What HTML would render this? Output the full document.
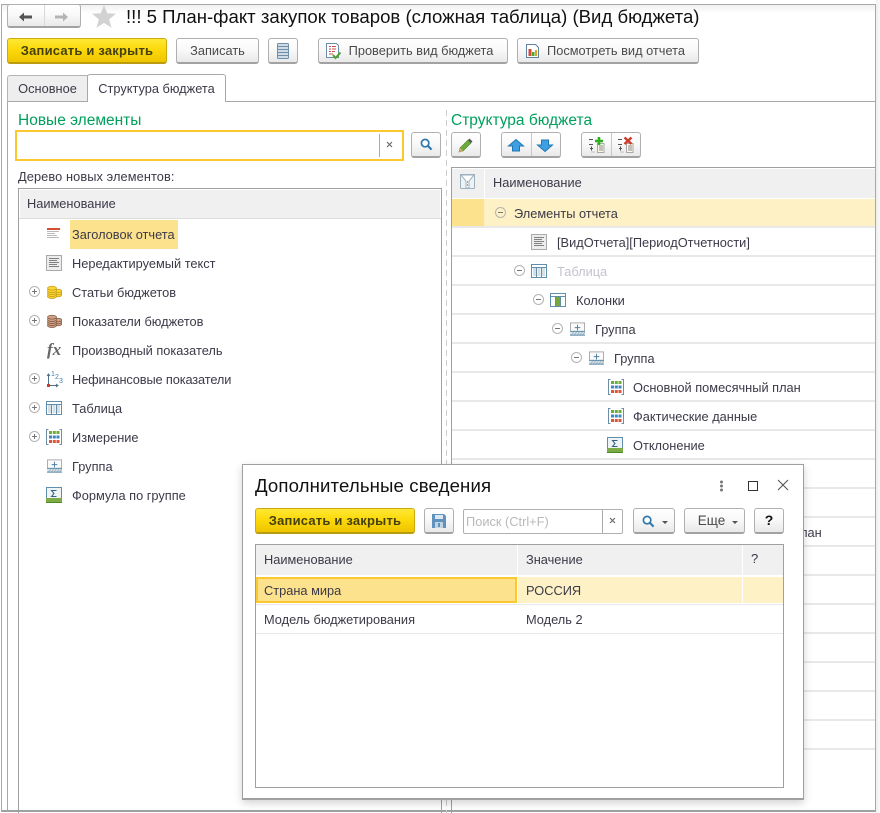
<!DOCTYPE html>
<html><head><meta charset="utf-8"><style>
*{box-sizing:border-box}
html,body{margin:0;padding:0;background:#fff}
#p{position:relative;width:880px;height:813px;overflow:hidden;background:#fff;font:12.8px/16px "Liberation Sans",Arial,sans-serif;color:#3b3a48}
.a{position:absolute}
.t{position:absolute;white-space:nowrap;line-height:16px;margin-top:1px}
.b{position:absolute;height:26px;border:1px solid #b0b0b0;border-bottom:2px solid #a2a2a2;border-radius:3px;background:linear-gradient(#fff,#f9f9f9 45%,#e9e9e9);text-align:center;line-height:23px;color:#4a4a4a;white-space:nowrap}
.y{background:linear-gradient(#ffe733,#fbd808 50%,#eec400);border:1px solid #c9aa10;border-bottom:2px solid #b99c10;color:#45400e;font-weight:bold;font-size:13px;letter-spacing:.2px}
.l{position:absolute;background:#e8e8e8;height:2px}
.h{position:absolute;background:#f0f0f0}
svg{position:absolute;overflow:visible}
.e{position:absolute;width:11px;height:11px;border:1px solid #b4b4b4;border-radius:50%;background:#fff}
.e:before{content:"";position:absolute;left:2px;top:4px;width:5px;height:1px;background:#777}
.e.p:after{content:"";position:absolute;left:4px;top:2px;width:1px;height:5px;background:#777}
</style></head><body><div id="p">
<svg width="0" height="0" style="position:absolute"><defs>
<symbol id="txt" viewBox="0 0 16 16"><rect x=".5" y=".5" width="15" height="15" fill="#ececec" stroke="#aaa"/><path d="M3 3.500h10M3 5.500h8M3 7.500h10M3 9.500h8M3 11.500h10" stroke="#808080" fill="none"/></symbol>
<symbol id="tab" viewBox="0 0 16 16"><rect x=".5" y="1.500" width="15" height="13" fill="#fff" stroke="#5f8fad"/><rect x="2" y="5" width="3" height="8" fill="#d5dfe6"/><rect x="6.500" y="5" width="3" height="8" fill="#d5dfe6"/><rect x="11" y="5" width="3" height="8" fill="#d5dfe6"/><path d="M1 4.500h14M5.500 4.500v10M10.500 4.500v10" stroke="#5f8fad" fill="none"/></symbol>
<symbol id="col" viewBox="0 0 16 16"><rect x=".5" y="1.500" width="15" height="13" fill="#fff" stroke="#5f8fad"/><rect x="6" y="5" width="4" height="9" fill="#76a83a"/><path d="M1 4.500h14M5.500 4.500v10M10.500 4.500v10" stroke="#5f8fad" fill="none"/></symbol>
<symbol id="grp" viewBox="0 0 16 16"><rect x=".5" y="1.500" width="15" height="13" fill="#fbfbfb" stroke="#a8a8a8"/><path d="M8 3.500v6M5 6.500h6" stroke="#4d7f9f" fill="none"/><rect x="0" y="10" width="16" height="5" fill="#dfe6ea"/><path d="M1 15l4-5M4 15l4-5M7 15l4-5M10 15l4-5M13 15l3-4" stroke="#9fb2bf" fill="none"/><path d="M0 10.500h16M0 14.500h16" stroke="#5f8fad" fill="none"/></symbol>
<symbol id="frm" viewBox="0 0 16 16"><rect x=".5" y=".5" width="15" height="14" fill="#eef3f5" stroke="#5f8fad"/><path d="M10.500 3.500h-5l2.500 3-2.500 3h5" fill="none" stroke="#33617f"/><rect x="0" y="11" width="16" height="4" fill="#7dab46"/><path d="M0 15.500h16" stroke="#4f8a28"/></symbol>
<symbol id="dim" viewBox="0 0 16 16"><path d="M2.500 .5h-2v15h2M13.500 .5h2v15h-2" fill="none" stroke="#6c8ea5"/><rect x="3" y="2" width="3" height="3" fill="#6fae3d"/><rect x="6.800" y="2" width="3" height="3" fill="#6fae3d"/><rect x="10.500" y="2" width="3" height="3" fill="#6fae3d"/><rect x="3" y="6.500" width="3" height="3" fill="#3f88bf"/><rect x="6.800" y="6.500" width="3" height="3" fill="#3f88bf"/><rect x="10.500" y="6.500" width="3" height="3" fill="#3f88bf"/><rect x="3" y="11" width="3" height="3" fill="#d9583c"/><rect x="6.800" y="11" width="3" height="3" fill="#d9583c"/><rect x="10.500" y="11" width="3" height="3" fill="#d9583c"/></symbol>
<symbol id="mag" viewBox="0 0 14 14"><circle cx="5.500" cy="5.500" r="4" fill="#fff" stroke="#2f78ad" stroke-width="1.800"/><path d="M8.500 8.500l4 4" stroke="#2f78ad" stroke-width="2.200"/></symbol>
<symbol id="coin" viewBox="0 0 15 14"><g fill="#f9d530" stroke="#c2961a" stroke-width=".7"><ellipse cx="11" cy="10" rx="3.700" ry="1.800"/><ellipse cx="11" cy="8" rx="3.700" ry="1.800"/><ellipse cx="11" cy="6" rx="3.700" ry="1.800"/><ellipse cx="5" cy="11.500" rx="4.500" ry="2"/><ellipse cx="5" cy="9.500" rx="4.500" ry="2"/><ellipse cx="5" cy="7.500" rx="4.500" ry="2"/><ellipse cx="5" cy="5.500" rx="4.500" ry="2"/><ellipse cx="5" cy="3.200" rx="4.500" ry="2"/></g></symbol>
<symbol id="bcoin" viewBox="0 0 15 14"><g fill="#cfa085" stroke="#7b5440" stroke-width=".7"><ellipse cx="11" cy="10" rx="3.700" ry="1.800"/><ellipse cx="11" cy="8" rx="3.700" ry="1.800"/><ellipse cx="11" cy="6" rx="3.700" ry="1.800"/><ellipse cx="5" cy="11.500" rx="4.500" ry="2"/><ellipse cx="5" cy="9.500" rx="4.500" ry="2"/><ellipse cx="5" cy="7.500" rx="4.500" ry="2"/><ellipse cx="5" cy="5.500" rx="4.500" ry="2"/><ellipse cx="5" cy="3.200" rx="4.500" ry="2"/></g></symbol>
<symbol id="dtree" viewBox="0 0 16 17"><path d="M0 3.500h4M0 8.500h4" stroke="#555" fill="none"/><path d="M2.500 10v6h3" stroke="#8aa08a" stroke-dasharray="1 1" fill="none"/><path d="M1 12.500h3M2.500 11v3" stroke="#555" fill="none"/><rect x="8.500" y="7.500" width="6.500" height="9" fill="#fbf8ea" stroke="#a8a8a8"/><path d="M10 10h4M10 12h4M10 14h4" stroke="#8a8a8a"/></symbol>
</defs></svg>

<!-- window frame -->
<div class="a" style="left:0;top:0;width:880px;height:813px;background:linear-gradient(90deg,#fff 875px,#eee 876px,#fafafa 880px)"></div>
<div class="a" style="left:0;top:0;width:876px;height:813px;background:#fff"></div>
<div class="a" style="left:1px;top:4px;width:875px;height:808px;border:1px solid #a8a8a8;border-bottom:2px solid #a0a0a0"></div>
<div class="a" style="left:2px;top:5px;width:873px;height:8px;background:linear-gradient(#f0f0f0,#fff)"></div>

<!-- nav -->
<div class="b" style="left:7px;top:4px;width:74px;height:24px"></div>
<div class="a" style="left:44px;top:5px;width:1px;height:21px;background:#d8d8d8"></div>
<svg style="left:19px;top:12px" width="14" height="10"><path d="M0 5l5-4.500v3h8v3H5v3z" fill="#555"/></svg>
<svg style="left:54px;top:12px" width="14" height="10"><path d="M14 5L9 .5v3H1v3h8v3z" fill="#b4b4b4"/></svg>
<svg style="left:92px;top:5px" width="24" height="24"><path d="M12 0l3.300 8.200 8.700.5-6.800 5.500 2.300 8.500L12 18l-7.500 4.700 2.300-8.500L0 8.700l8.700-.5z" fill="#d2d2d2"/></svg>
<div class="t" style="left:126px;top:6px;font-size:18.6px;line-height:20px;color:#111">!!! 5 План-факт закупок товаров (сложная таблица) (Вид бюджета)</div>

<!-- toolbar -->
<div class="b y" style="left:7px;top:38px;width:160px">Записать и закрыть</div>
<div class="b" style="left:176px;top:38px;width:83px">Записать</div>
<div class="b" style="left:268px;top:38px;width:30px"></div>
<svg style="left:277px;top:43px" width="12" height="16"><rect x=".5" y=".5" width="11" height="15" rx="1" fill="#cfdbe6" stroke="#6f8fa8"/><path d="M1 3.500h10M1 6.500h10M1 9.500h10M1 12.500h10" stroke="#6f8fa8"/></svg>
<div class="b" style="left:318px;top:38px;width:190px;padding-left:16px">Проверить вид бюджета</div>
<svg style="left:326px;top:43px" width="16" height="17"><path d="M.5.5h10l2 2v12H.5z" fill="#fff" stroke="#6d8ca5"/><path d="M3 3.500h2M6 3.500h4M3 6h2M6 6h4M3 8.500h2M6 8.500h3M3 11h4" stroke="#c0504d"/><path d="M7 12l2.500 3 5-5.500" fill="none" stroke="#4fa32c" stroke-width="2"/></svg>
<div class="b" style="left:517px;top:38px;width:182px;padding-left:16px">Посмотреть вид отчета</div>
<svg style="left:526px;top:44px" width="13" height="15"><path d="M.5.5h9l3 3v10H.5z" fill="#fff" stroke="#5f82a0"/><rect x="2.500" y="5" width="3" height="7" fill="#d24a3a"/><rect x="6" y="8" width="2.500" height="4" fill="#4fa32c"/><rect x="9" y="6" width="2" height="6" fill="#e0a020"/></svg>

<!-- tabs -->
<div class="a" style="left:7px;top:101px;width:869px;height:1px;background:#a8a8a8"></div>
<div class="a" style="left:7px;top:101px;width:1px;height:711px;background:#a8a8a8"></div>
<div class="a" style="left:7px;top:75px;width:81px;height:27px;background:#eee;border:1px solid #b4b4b4;border-bottom:1px solid #a8a8a8;border-radius:3px 0 0 0;text-align:center;line-height:25px">Основное</div>
<div class="a" style="left:87px;top:74px;width:139px;height:28px;background:#fff;border:1px solid #a8a8a8;border-bottom:0;border-radius:3px 3px 0 0;text-align:center;line-height:27px">Структура бюджета</div>

<!-- left pane -->
<div class="t" style="left:18px;top:110px;font-size:15.5px;line-height:20px;color:#00a05c">Новые элементы</div>
<div class="a" style="left:15px;top:130px;width:389px;height:31px;border:2px solid #fbc82f;background:#fff"></div>
<div class="a" style="left:379px;top:134px;width:1px;height:23px;background:#aaa"></div>
<svg style="left:386px;top:141px" width="8" height="8"><path d="M1 1l5 5M6 1l-5 5" stroke="#666" stroke-width="1.100"/></svg>
<div class="b" style="left:411px;top:132px;width:30px"></div>
<svg style="left:420px;top:138px" width="13" height="13"><use href="#mag"/></svg>
<div class="t" style="left:18px;top:168px;letter-spacing:.09px">Дерево новых элементов:</div>
<div class="a" style="left:18px;top:188px;width:424px;height:625px;border:1px solid #a0a0a0;border-width:1px 1px 0 1px"></div>
<div class="h" style="left:20px;top:190px;width:420px;height:28px"></div>
<div class="a" style="left:19px;top:218px;width:422px;height:1px;background:#ddd"></div>
<div class="t" style="left:27px;top:195px">Наименование</div>

<div class="a" style="left:70px;top:220px;width:108px;height:29px;background:#fde28e"></div>
<div class="t" style="left:72px;top:226px">Заголовок отчета</div>
<svg style="left:47px;top:228px" width="13" height="12"><rect width="13" height="2" fill="#d24f35"/><path d="M0 3.500h12M0 5.500h8M0 7.500h10M0 9.500h12" stroke="#b9b9b9"/></svg>
<svg style="left:46px;top:255px" width="16" height="16"><use href="#txt"/></svg><div class="t" style="left:72px;top:255px">Нередактируемый текст</div>
<div class="e p" style="left:29px;top:286px"></div><svg style="left:47px;top:285px" width="15" height="14"><use href="#coin"/></svg><div class="t" style="left:72px;top:284px">Статьи бюджетов</div>
<div class="e p" style="left:29px;top:315px"></div><svg style="left:47px;top:314px" width="15" height="14"><use href="#bcoin"/></svg><div class="t" style="left:72px;top:313px">Показатели бюджетов</div>
<div class="t" style="left:47px;top:340px;font:italic bold 17px/18px 'Liberation Serif',serif;color:#666">fx</div><div class="t" style="left:72px;top:342px">Производный показатель</div>
<div class="e p" style="left:29px;top:373px"></div>
<svg style="left:46px;top:371px" width="17" height="16"><path d="M2.500 4v10.500H12" fill="none" stroke="#50708a"/><path d="M1 5l1.500-2L4 5M10 13l2 1.500L10 16" fill="none" stroke="#50708a"/><rect x="1" y="13" width="3" height="3" fill="#d2372c"/><text x="5" y="5" font-size="7" font-family="Liberation Sans" fill="#3c7fb0">1</text><text x="9" y="8" font-size="7" font-family="Liberation Sans" fill="#3c7fb0">2</text><text x="13" y="12" font-size="7" font-family="Liberation Sans" fill="#3c7fb0">3</text></svg>
<div class="t" style="left:72px;top:371px;letter-spacing:-.13px">Нефинансовые показатели</div>
<div class="e p" style="left:29px;top:402px"></div><svg style="left:46px;top:400px" width="16" height="16"><use href="#tab"/></svg><div class="t" style="left:72px;top:400px">Таблица</div>
<div class="e p" style="left:29px;top:431px"></div><svg style="left:46px;top:429px" width="16" height="16"><use href="#dim"/></svg><div class="t" style="left:72px;top:429px">Измерение</div>
<svg style="left:47px;top:458px" width="15" height="16"><use href="#grp"/></svg><div class="t" style="left:72px;top:458px">Группа</div>
<svg style="left:46px;top:487px" width="16" height="16"><use href="#frm"/></svg><div class="t" style="left:72px;top:487px">Формула по группе</div>

<!-- splitter -->
<div class="a" style="left:446px;top:110px;width:1px;height:703px;background:repeating-linear-gradient(#ccc 0 6px,transparent 6px 10px)"></div>

<!-- right pane -->
<div class="t" style="left:451px;top:110px;font-size:15.5px;line-height:20px;color:#00a05c">Структура бюджета</div>
<div class="b" style="left:451px;top:132px;width:30px"></div>
<svg style="left:458px;top:138px" width="15" height="15"><path d="M1 14l1-4L10 2l3 3-8 8z" fill="#6cab3c" stroke="#4a7f2a" stroke-width=".6"/><path d="M10 2l1.500-1.500 3 3L13 5z" fill="#555"/><path d="M1 14l1-4 3 3z" fill="#e0a868"/></svg>
<div class="b" style="left:501px;top:132px;width:60px"></div><div class="a" style="left:531px;top:133px;width:1px;height:23px;background:#c8c8c8"></div>
<svg style="left:508px;top:139px" width="16" height="13"><path d="M8 .5L15.500 7H11.500v5h-7V7H.5z" fill="#3f9fe0" stroke="#1e78b5"/></svg>
<svg style="left:537px;top:139px" width="16" height="13"><path d="M8 12.500L15.500 6H11.500V1h-7v5H.5z" fill="#3f9fe0" stroke="#1e78b5"/></svg>
<div class="b" style="left:581px;top:132px;width:60px"></div><div class="a" style="left:611px;top:133px;width:1px;height:23px;background:#c8c8c8"></div>
<svg style="left:589px;top:136px" width="16" height="17"><use href="#dtree" width="16" height="17"/><path d="M6 5h8M10 1v8" stroke="#2fae1f" stroke-width="2.600"/></svg>
<svg style="left:618px;top:136px" width="16" height="17"><use href="#dtree" width="16" height="17"/><path d="M6.500 1.500l7 6.500M13.500 1.500l-7 6.500" stroke="#cf3a2a" stroke-width="2.400"/></svg>

<div class="a" style="left:451px;top:167px;width:425px;height:646px;border-left:1px solid #a0a0a0;border-top:1px solid #a0a0a0"></div>
<div class="h" style="left:452px;top:169px;width:32px;height:29px"></div>
<div class="h" style="left:485px;top:169px;width:390px;height:29px"></div>
<svg style="left:460px;top:174px" width="15" height="15"><path d="M.5.5h14v13a1 1 0 0 1-1 1h-12a1 1 0 0 1-1-1z" fill="#eef2f5" stroke="#9db0bd"/><path d="M1 1l5 6v7h3V7l5-6z" fill="#fff" stroke="#9db0bd"/><path d="M7.500 7v5" stroke="#d8898a" stroke-dasharray="2 1"/></svg>
<div class="t" style="left:493px;top:174px">Наименование</div>
<div class="a" style="left:452px;top:199px;width:32px;height:27px;background:#fde28e"></div>
<div class="a" style="left:484px;top:199px;width:391px;height:27px;background:#fdf1c5"></div>

<div class="l" style="left:452px;top:226px;width:423px"></div>
<div class="l" style="left:452px;top:255px;width:423px"></div>
<div class="l" style="left:452px;top:284px;width:423px"></div>
<div class="l" style="left:452px;top:313px;width:423px"></div>
<div class="l" style="left:452px;top:342px;width:423px"></div>
<div class="l" style="left:452px;top:371px;width:423px"></div>
<div class="l" style="left:452px;top:400px;width:423px"></div>
<div class="l" style="left:452px;top:429px;width:423px"></div>
<div class="l" style="left:452px;top:458px;width:423px"></div>
<div class="l" style="left:452px;top:487px;width:423px"></div>
<div class="l" style="left:452px;top:516px;width:423px"></div>
<div class="l" style="left:452px;top:545px;width:423px"></div>
<div class="l" style="left:452px;top:574px;width:423px"></div>
<div class="l" style="left:452px;top:603px;width:423px"></div>
<div class="l" style="left:452px;top:632px;width:423px"></div>
<div class="l" style="left:452px;top:661px;width:423px"></div>
<div class="l" style="left:452px;top:690px;width:423px"></div>
<div class="l" style="left:452px;top:719px;width:423px"></div>
<div class="l" style="left:452px;top:748px;width:423px"></div>

<div class="e" style="left:495px;top:207px;background:transparent"></div><div class="t" style="left:514px;top:205px">Элементы отчета</div>
<svg style="left:531px;top:234px" width="16" height="16"><use href="#txt"/></svg><div class="t" style="left:557px;top:234px">[ВидОтчета][ПериодОтчетности]</div>
<div class="e" style="left:514px;top:265px"></div><svg style="left:531px;top:263px" width="16" height="16"><use href="#tab"/></svg><div class="t" style="left:557px;top:263px;color:#c4c4cc">Таблица</div>
<div class="e" style="left:533px;top:294px"></div><svg style="left:550px;top:292px" width="16" height="16"><use href="#col"/></svg><div class="t" style="left:576px;top:292px">Колонки</div>
<div class="e" style="left:552px;top:323px"></div><svg style="left:570px;top:321px" width="15" height="16"><use href="#grp"/></svg><div class="t" style="left:595px;top:321px">Группа</div>
<div class="e" style="left:571px;top:352px"></div><svg style="left:589px;top:350px" width="15" height="16"><use href="#grp"/></svg><div class="t" style="left:614px;top:350px">Группа</div>
<svg style="left:608px;top:379px" width="16" height="16"><use href="#dim"/></svg><div class="t" style="left:633px;top:379px">Основной помесячный план</div>
<svg style="left:608px;top:408px" width="16" height="16"><use href="#dim"/></svg><div class="t" style="left:633px;top:408px">Фактические данные</div>
<svg style="left:607px;top:437px" width="16" height="16"><use href="#frm"/></svg><div class="t" style="left:633px;top:437px">Отклонение</div>
<div class="t" style="left:654px;top:524px">Основной помесячный план</div>

<!-- dialog -->
<div class="a" style="left:242px;top:464px;width:562px;height:336px;background:#fff;border:1px solid #a0a0a0;border-bottom:2px solid #a0a0a0;box-shadow:0 3px 8px rgba(0,0,0,.18)"></div>
<div class="t" style="left:255px;top:474px;font-size:18.6px;line-height:22px;color:#111;letter-spacing:.13px">Дополнительные сведения</div>
<svg style="left:719px;top:480px" width="5" height="12"><circle cx="2.500" cy="2" r="1.500" fill="#777"/><circle cx="2.500" cy="6" r="1.500" fill="#777"/><circle cx="2.500" cy="10" r="1.500" fill="#777"/></svg>
<div class="a" style="left:748px;top:481px;width:10px;height:10px;border:1.500px solid #333"></div>
<svg style="left:777px;top:479px" width="12" height="12"><path d="M1 1l10 10M11 1L1 11" stroke="#555" stroke-width="1.100"/></svg>

<div class="b y" style="left:255px;top:508px;width:160px">Записать и закрыть</div>
<div class="b" style="left:424px;top:508px;width:30px"></div>
<svg style="left:432px;top:514px" width="14" height="14"><path d="M0 0h12l2 2v12H0z" fill="#5f93bd"/><rect x="3" y="1" width="8" height="4" fill="#dce8f1"/><rect x="3" y="8" width="8" height="6" fill="#c3d3df"/><rect x="6" y="9" width="2" height="4" fill="#5f93bd"/></svg>
<div class="a" style="left:463px;top:509px;width:160px;height:25px;border:1px solid #b0b0b0;border-radius:2px;background:#fff"></div>
<div class="a" style="left:602px;top:510px;width:1px;height:23px;background:#aaa"></div>
<div class="t" style="left:466px;top:513px;color:#b9b9b9">Поиск (Ctrl+F)</div>
<svg style="left:609px;top:517px" width="8" height="8"><path d="M1 1l5 5M6 1l-5 5" stroke="#666" stroke-width="1.100"/></svg>
<div class="b" style="left:633px;top:508px;width:42px"></div>
<svg style="left:642px;top:515px" width="13" height="13"><use href="#mag"/></svg>
<svg style="left:662px;top:521px" width="6" height="3"><path d="M0 0h6L3 3z" fill="#555"/></svg>
<div class="b" style="left:684px;top:508px;width:61px;padding-right:6px;font-size:13.5px">Еще</div>
<svg style="left:732px;top:521px" width="6" height="3"><path d="M0 0h6L3 3z" fill="#555"/></svg>
<div class="b" style="left:754px;top:508px;width:30px;color:#111;font-weight:bold;font-size:14px">?</div>

<div class="a" style="left:255px;top:544px;width:529px;height:244px;border:1px solid #a0a0a0"></div>
<div class="h" style="left:256px;top:545px;width:261px;height:30px"></div>
<div class="h" style="left:518px;top:545px;width:224px;height:30px"></div>
<div class="h" style="left:743px;top:545px;width:40px;height:30px"></div>
<div class="t" style="left:264px;top:551px">Наименование</div>
<div class="t" style="left:526px;top:551px">Значение</div>
<div class="t" style="left:751px;top:550px;font-size:13px">?</div>
<div class="a" style="left:256px;top:577px;width:261px;height:26px;background:#fde28e;border:2px solid #fbc82f"></div>
<div class="a" style="left:518px;top:577px;width:224px;height:26px;background:#fdf1c5"></div>
<div class="a" style="left:743px;top:577px;width:40px;height:26px;background:#fdf1c5"></div>
<div class="l" style="left:256px;top:604px;width:527px;height:1px"></div>
<div class="l" style="left:256px;top:633px;width:527px;height:1px"></div>
<div class="t" style="left:264px;top:582px">Страна мира</div>
<div class="t" style="left:526px;top:582px">РОССИЯ</div>
<div class="t" style="left:264px;top:611px">Модель бюджетирования</div>
<div class="t" style="left:526px;top:611px">Модель 2</div>
</div></body></html>
